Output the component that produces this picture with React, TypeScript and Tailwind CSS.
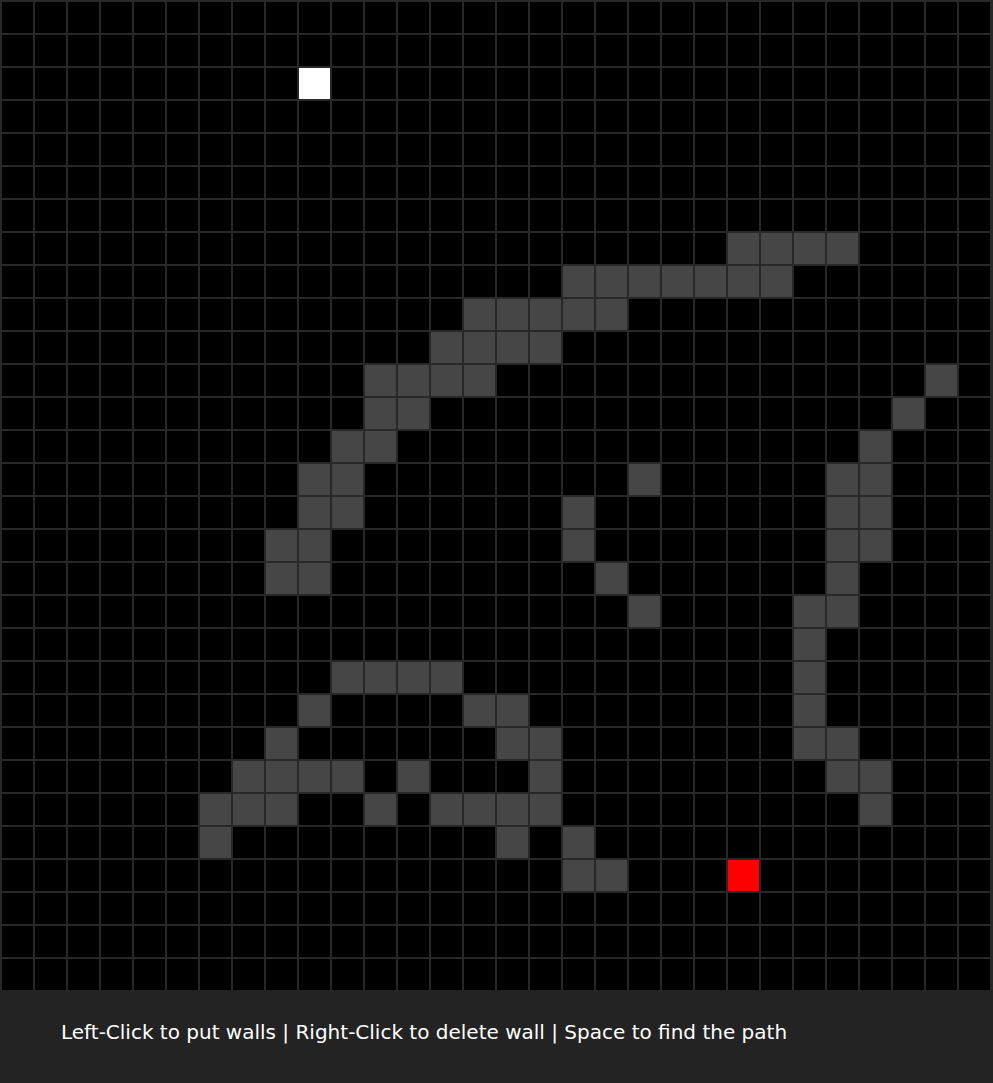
import React from "react";

const walls: Record<number, number[]> = {
  7: [22, 23, 24, 25],
  8: [17, 18, 19, 20, 21, 22, 23],
  9: [14, 15, 16, 17, 18],
  10: [13, 14, 15, 16],
  11: [11, 12, 13, 14, 28],
  12: [11, 12, 27],
  13: [10, 11, 26],
  14: [9, 10, 19, 25, 26],
  15: [9, 10, 17, 25, 26],
  16: [8, 9, 17, 25, 26],
  17: [8, 9, 18, 25],
  18: [19, 24, 25],
  19: [24],
  20: [10, 11, 12, 13, 24],
  21: [9, 14, 15, 24],
  22: [8, 15, 16, 24, 25],
  23: [7, 8, 9, 10, 12, 16, 25, 26],
  24: [6, 7, 8, 11, 13, 14, 15, 16, 26],
  25: [6, 15, 17],
  26: [17, 18],
};

export default function App() {
  const cells: React.ReactNode[] = [];
  for (let r = 0; r < 30; r++) {
    for (let c = 0; c < 30; c++) {
      let cls = "bg-black";
      if (r === 2 && c === 9) cls = "bg-white";
      else if (r === 26 && c === 22) cls = "bg-[#ff0000]";
      else if (walls[r]?.includes(c)) cls = "bg-[#464646]";
      cells.push(<div key={`${r}-${c}`} className={cls} />);
    }
  }
  return (
    <div className="w-[993px] h-[1083px] bg-[#232323] overflow-hidden">
      <div className="w-[993px] h-[990px] bg-[#282828] pl-[2px] pt-[2px]">
        <div className="grid grid-cols-[repeat(30,31px)] grid-rows-[repeat(30,31px)] gap-[2px]">
          {cells}
        </div>
      </div>
      <div
        className="h-[93px] pl-[61px] pt-[30px] text-white text-[20px] leading-[24px] whitespace-nowrap"
        style={{ fontFamily: '"DejaVu Sans", sans-serif' }}
      >
        Left-Click to put walls | Right-Click to delete wall | Space to find the path
      </div>
    </div>
  );
}
